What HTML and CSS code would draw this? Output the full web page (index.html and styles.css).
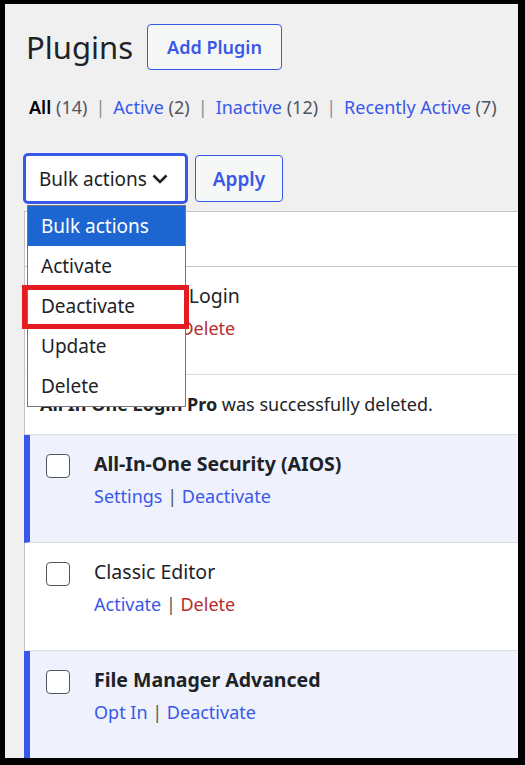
FILE: index.html
```html
<!DOCTYPE html>
<html lang="en">
<head>
<meta charset="utf-8">
<title>Plugins</title>
<link rel="stylesheet" href="styles.css">
</head>
<body>
<div class="screen">
  <div class="head">
    <h1 class="title">Plugins</h1>
    <a class="btn-outline add">Add Plugin</a>
  </div>
  <ul class="filters">
    <li><b class="current">All</b> <span class="count">(14)</span></li>
    <li class="sep">|</li>
    <li><a>Active</a> <span class="count">(2)</span></li>
    <li class="sep">|</li>
    <li><a>Inactive</a> <span class="count">(12)</span></li>
    <li class="sep">|</li>
    <li><a>Recently Active</a> <span class="count">(7)</span></li>
  </ul>
  <div class="bulk">
    <div class="select-wrap">
      <div class="select">
        <span>Bulk actions</span>
        <svg class="chev" width="16" height="10" viewBox="0 0 16 10"><path d="M1.5 1.5 8 8l6.5-6.5" fill="none" stroke="#1d2327" stroke-width="2.6"/></svg>
      </div>
      <ul class="menu">
        <li class="hl">Bulk actions</li>
        <li>Activate</li>
        <li>Deactivate</li>
        <li>Update</li>
        <li>Delete</li>
      </ul>
      <div class="redbox"></div>
    </div>
    <a class="btn-outline apply">Apply</a>
  </div>
  <div class="table">
    <div class="thead">
      <span class="cb"></span>
      <span class="col">Plugin</span>
    </div>
    <div class="row">
      <span class="cb"></span>
      <div class="info">
        <div class="name">All In One Login</div>
        <div class="actions"><a>Activate</a> <span class="bar">|</span> <a class="del">Delete</a></div>
      </div>
    </div>
    <div class="notice-row">
      <b>All In One Login Pro</b> was successfully deleted.
    </div>
    <div class="row active">
      <span class="cb"></span>
      <div class="info">
        <div class="name">All-In-One Security (AIOS)</div>
        <div class="actions"><a>Settings</a> <span class="bar">|</span> <a>Deactivate</a></div>
      </div>
    </div>
    <div class="row">
      <span class="cb"></span>
      <div class="info">
        <div class="name">Classic Editor</div>
        <div class="actions"><a>Activate</a> <span class="bar">|</span> <a class="del">Delete</a></div>
      </div>
    </div>
    <div class="row active">
      <span class="cb"></span>
      <div class="info">
        <div class="name">File Manager Advanced</div>
        <div class="actions"><a>Opt In</a> <span class="bar">|</span> <a>Deactivate</a></div>
      </div>
    </div>
  </div>
</div>
</body>
</html>
```

FILE: styles.css
```css
* { box-sizing: border-box; }
html, body { margin: 0; padding: 0; }
body {
  background: #000;
  width: 525px;
  height: 765px;
  overflow: hidden;
  font-family: "Noto Sans", "Open Sans", sans-serif;
  color: #1d2327;
}
.screen {
  margin: 4px 7px 0 5px;
  height: 754px;
  background: #f0f0f1;
  overflow: hidden;
  padding-left: 19px;
}
a { color: #3858e9; text-decoration: none; }
ul { list-style: none; margin: 0; padding: 0; }

.head {
  display: flex;
  align-items: center;
  margin-top: 20px;
  height: 46px;
  gap: 14px;
}
.title {
  margin: 0 0 0 2px;
  font-size: 31px;
  font-weight: 400;
  line-height: 46px;
  color: #1d2327;
  white-space: nowrap;
}
.btn-outline {
  display: flex;
  align-items: center;
  justify-content: center;
  border: 1px solid #3858e9;
  border-radius: 4px;
  color: #3858e9;
  font-weight: 600;
  font-size: 18px;
  background: #f6f7f7;
  white-space: nowrap;
}
.add { width: 135px; height: 46px; }

.filters {
  display: flex;
  align-items: center;
  margin: 25px 0 0 5px;
  height: 24px;
  font-size: 18px;
  gap: 8px;
  white-space: nowrap;
}
.filters li { flex: none; }
.filters .current { font-weight: 600; color: #000; }
.filters .count { color: #50575e; }
.filters .sep { color: #8c8f94; }

.bulk {
  display: flex;
  align-items: center;
  margin-top: 34px;
  margin-left: -1px;
  gap: 7px;
  height: 51px;
}
.select-wrap { position: relative; }
.select {
  width: 165px;
  height: 51px;
  border: 3px solid #3858e9;
  border-radius: 5px;
  background: #fff;
  display: flex;
  align-items: center;
  padding-left: 13px;
  font-size: 19px;
  color: #1d2327;
  white-space: nowrap;
}
.chev { margin-left: 5px; margin-top: 1px; }
.apply { width: 88px; height: 47px; font-size: 19px; }

.menu {
  position: absolute;
  top: 52px;
  left: 4px;
  width: 159px;
  background: #fff;
  border: 1px solid #767676;
  z-index: 5;
  font-size: 19px;
}
.menu li {
  height: 40px;
  line-height: 40px;
  padding-left: 13px;
  color: #1d2327;
  white-space: nowrap;
}
.menu li.hl { background: #1d65d0; color: #fff; }
.redbox {
  position: absolute;
  left: -1px;
  top: 132px;
  width: 167px;
  height: 44px;
  border: 5px solid #e31b23;
  z-index: 6;
}

.table {
  margin-top: 7px;
  border-left: 1px solid #c3c4c7;
  border-top: 1px solid #c3c4c7;
  background: #fff;
  width: 600px;
}
.thead {
  height: 55px;
  border-bottom: 1px solid #c3c4c7;
  display: flex;
  align-items: center;
  padding-left: 21px;
  font-size: 18px;
}
.thead .col { margin-left: 24px; }
.cb {
  width: 24px;
  height: 24px;
  border: 1px solid #50575e;
  border-radius: 4px;
  background: #fff;
  flex: none;
}
.row {
  display: flex;
  height: 108px;
  border-bottom: 1px solid #dcdcde;
  border-left: 6px solid transparent;
  margin-left: -1px;
  padding: 19px 0 0 16px;
}
.row.active {
  background: #eff2fc;
  border-left-color: #3858e9;
}
.row .info { margin-left: 24px; font-size: 18px; white-space: nowrap; }
.row .name { line-height: 26px; margin-top: -3px; font-size: 19.5px; }
.row.active .name { font-weight: 700; }
.row .actions { margin-top: 6px; line-height: 26px; }
.bar { color: #50575e; }
.del { color: #b32d2e; }

.notice-row {
  height: 60px;
  border-bottom: 1px solid #dcdcde;
  padding: 17px 0 0 15px;
  font-size: 18px;
  color: #1d2327;
  white-space: nowrap;
}
.notice-row b { font-weight: 700; }
```
